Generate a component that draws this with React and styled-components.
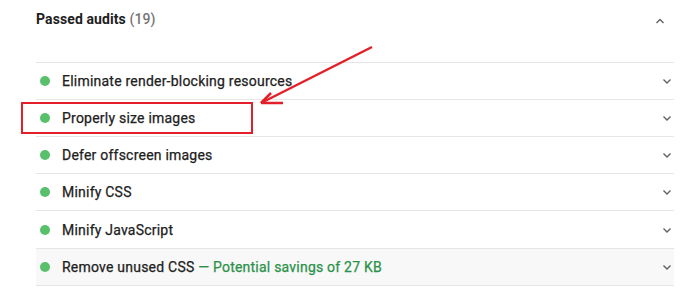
import React from "react";
import styled, { createGlobalStyle } from "styled-components";

const Global = createGlobalStyle`
  html, body { margin: 0; padding: 0; background: #fff; }
  body { font-family: Roboto, "Liberation Sans", Arial, sans-serif; -webkit-font-smoothing: antialiased; }
`;

const Page = styled.div`
  position: relative;
  width: 683px;
  height: 296px;
  overflow: hidden;
  padding: 0 9px 0 36px;
  box-sizing: border-box;
`;

const Header = styled.div`
  height: 62px;
  display: flex;
  align-items: flex-start;
  justify-content: space-between;
  box-sizing: border-box;
  padding-top: 10px;
  padding-right: 9px;
`;

const HeaderTitle = styled.div`
  font-size: 14px;
  font-weight: 700;
  color: #212121;
  line-height: 18px;
  letter-spacing: 0.1px;
`;

const Count = styled.span`
  color: #757575;
  font-weight: 500;
`;

const HeaderChevron = styled.div`
  margin-top: 7px;
  display: flex;
`;

const List = styled.div`
  border-top: 1px solid #e6e6e6;
`;

const Row = styled.div`
  height: 36px;
  display: flex;
  align-items: center;
  border-bottom: 1px solid #e6e6e6;
  background: ${(p) => (p.$shaded ? "#f8f8f8" : "#fff")};
  padding: 0 2px 0 4px;
  &:nth-child(5) { height: 37px; }
`;

const Dot = styled.span`
  width: 10px;
  height: 10px;
  border-radius: 50%;
  background: #58bf6b;
  flex: none;
  margin-right: 12px;
`;

const Title = styled.span`
  flex: 1;
  font-size: 14px;
  font-weight: 400;
  letter-spacing: 0.22px;
  color: #212121;
  white-space: nowrap;
  -webkit-text-stroke: 0.25px #212121;
`;

const Savings = styled.span`
  color: #2a9248;
  -webkit-text-stroke: 0.25px #2a9248;
`;

const Chevron = styled.svg`
  flex: none;
`;

const Overlay = styled.svg`
  position: absolute;
  left: 0;
  top: 0;
  pointer-events: none;
`;

const Highlight = styled.div`
  position: absolute;
  left: 21px;
  top: 102px;
  width: 232px;
  height: 32px;
  border: 2px solid #e3202a;
  box-sizing: border-box;
`;

const Down = () => (
  <Chevron width="10" height="8" viewBox="0 0 10 8">
    <path d="M1.5 2.5 L5 6 L8.5 2.5" fill="none" stroke="#616161" strokeWidth="1.4" />
  </Chevron>
);

const Up = () => (
  <Chevron width="10" height="8" viewBox="0 0 10 8">
    <path d="M1.5 6 L5 2.5 L8.5 6" fill="none" stroke="#616161" strokeWidth="1.4" />
  </Chevron>
);

const audits = [
  { title: "Eliminate render-blocking resources" },
  { title: "Properly size images" },
  { title: "Defer offscreen images" },
  { title: "Minify CSS" },
  { title: "Minify JavaScript" },
  { title: "Remove unused CSS", savings: " \u2014 Potential savings of 27 KB", shaded: true },
];

export default function App() {
  return (
    <>
      <Global />
      <Page>
        <Header>
          <HeaderTitle>
            Passed audits <Count>(19)</Count>
          </HeaderTitle>
          <HeaderChevron>
            <Up />
          </HeaderChevron>
        </Header>
        <List>
          {audits.map((a) => (
            <Row key={a.title} $shaded={a.shaded}>
              <Dot />
              <Title>
                {a.title}
                {a.savings && <Savings>{a.savings}</Savings>}
              </Title>
              <Down />
            </Row>
          ))}
        </List>
        <Highlight />
        <Overlay width="683" height="296" viewBox="0 0 683 296">
          <g stroke="#e3202a" strokeWidth="2.5" fill="none" strokeLinecap="butt">
            <path d="M372 47 L261 103" />
            <path d="M261 103 L271 93" />
            <path d="M261 103 L283 103" />
          </g>
        </Overlay>
      </Page>
    </>
  );
}
